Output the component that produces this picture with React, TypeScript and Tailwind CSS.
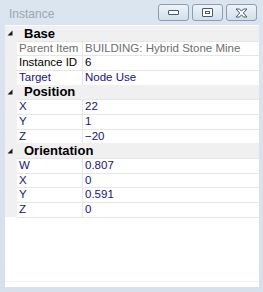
import React from 'react';

type Item = { name: string; value: string; tone: 'gray' | 'black' | 'blue' };
type Group = { title: string; items: Item[] };

const groups: Group[] = [
  {
    title: 'Base',
    items: [
      { name: 'Parent Item', value: 'BUILDING: Hybrid Stone Mine', tone: 'gray' },
      { name: 'Instance ID', value: '6', tone: 'black' },
      { name: 'Target', value: 'Node Use', tone: 'blue' },
    ],
  },
  {
    title: 'Position',
    items: [
      { name: 'X', value: '22', tone: 'blue' },
      { name: 'Y', value: '1', tone: 'blue' },
      { name: 'Z', value: '−20', tone: 'blue' },
    ],
  },
  {
    title: 'Orientation',
    items: [
      { name: 'W', value: '0.807', tone: 'blue' },
      { name: 'X', value: '0', tone: 'blue' },
      { name: 'Y', value: '0.591', tone: 'blue' },
      { name: 'Z', value: '0', tone: 'blue' },
    ],
  },
];

const toneClass = {
  gray: 'text-[#6e6e6e]',
  black: 'text-black',
  blue: 'text-[#14148a]',
};

const Expander = () => (
  <svg width="6" height="6" viewBox="0 0 6 6" className="block">
    <polygon points="5.5,0.5 5.5,5.5 0.5,5.5" fill="#1a1a1a" />
  </svg>
);

const WinButton = ({ children }: { children: React.ReactNode }) => (
  <div className="w-[31px] h-[17px] rounded-[3px] border border-[#8b9db3] bg-gradient-to-b from-[#eef3f8] to-[#d3dfeb] flex items-center justify-center">
    {children}
  </div>
);

export default function App() {
  return (
    <div
      className="w-[263px] h-[292px] bg-gradient-to-b from-[#dbe5f0] to-[#d6e1ed] flex flex-col overflow-hidden"
      style={{ fontFamily: '"Liberation Sans", Arial, sans-serif' }}
    >
      {/* title bar */}
      <div className="h-[25px] flex items-start pl-[9px] pr-[6px]">
        <span className="mt-[8px] text-[12px] text-[#9aa6b4] leading-none">Instance</span>
        <div className="ml-auto mt-[4px] flex gap-[3px]">
          <WinButton>
            <div className="w-[11px] h-[5px] rounded-[1px] border border-[#4a5a6e] bg-white" />
          </WinButton>
          <WinButton>
            <div className="w-[11px] h-[9px] rounded-[1px] border border-[#4a5a6e] bg-white flex items-center justify-center">
              <div className="w-[5px] h-[3px] border border-[#4a5a6e]" />
            </div>
          </WinButton>
          <WinButton>
            <svg width="13" height="10" viewBox="0 0 13 10">
              <path
                d="M1 1 L4.5 1 L6.5 3.2 L8.5 1 L12 1 L8.3 5 L12 9 L8.5 9 L6.5 6.8 L4.5 9 L1 9 L4.7 5 Z"
                fill="#fff"
                stroke="#4a5a6e"
                strokeWidth="1"
                strokeLinejoin="round"
              />
            </svg>
          </WinButton>
        </div>
      </div>

      {/* property grid */}
      <div className="ml-[5px] mr-[4px] h-[262px] bg-white pt-[1px] flex flex-col">
        {groups.map((g) => (
          <div key={g.title} className="flex flex-col">
            <div className="h-[14.67px] bg-[#f0f0f0] flex items-center">
              <div className="w-[12px] pl-[2px] flex items-center">
                <Expander />
              </div>
              <span className="pl-[7px] text-[13px] font-bold text-black leading-none">{g.title}</span>
            </div>
            {g.items.map((it, i) => (
              <div key={i} className="h-[14.67px] flex">
                <div className="w-[12px] bg-[#f0f0f0]" />
                <div className="w-[66px] border-t border-[#e6e6e6] border-r flex items-center pl-[2px]">
                  <span className={`text-[11.5px] leading-none ${toneClass[it.tone]}`}>{it.name}</span>
                </div>
                <div className="flex-1 border-t border-[#e6e6e6] flex items-center pl-[2px]">
                  <span className={`text-[11.5px] leading-none ${toneClass[it.tone]}`}>{it.value}</span>
                </div>
              </div>
            ))}
          </div>
        ))}
        <div className="border-t border-[#e6e6e6] ml-[12px]" />
        <div className="mt-auto mb-[5px] border-t border-[#f2f2f2]" />
      </div>
    </div>
  );
}
